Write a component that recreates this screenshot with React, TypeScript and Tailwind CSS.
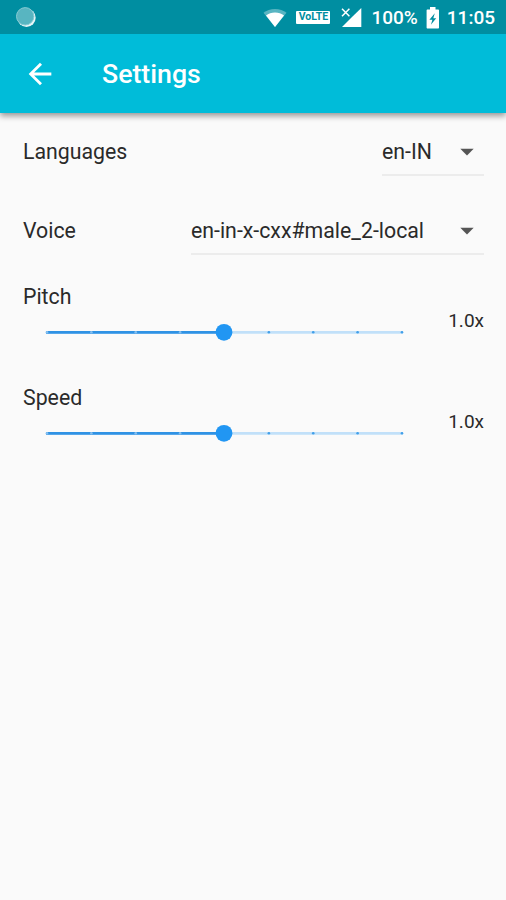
import React from 'react';

interface DropdownRowProps {
    label: string;
    value: string;
    fieldClass: string;
}

interface SliderRowProps {
    label: string;
    value: number;
    min: number;
    max: number;
}

const TRACK_START = 3;
const TRACK_LENGTH = 355;
const DIVISIONS = 8;

function StatusBar() {
    return (
        <div className="flex h-[34px] items-center bg-[#008ea1] pl-4 pr-[11px] text-white">
            <svg width="20" height="20" viewBox="0 0 20 20">
                <circle cx="10.500" cy="10.700" r="9.200" fill="#e6f5f7" />
                <circle cx="9.200" cy="9.300" r="8.700" fill="#58b5c1" stroke="#86cad3" strokeWidth="1" />
            </svg>
            <div className="ml-auto flex items-center">
                <svg width="24" height="20" viewBox="0 0 24 20">
                    <path d="M12 20 0.500 5.700C3.500 3.300 7.500 1.900 12 1.900s8.500 1.400 11.500 3.800z" fill="#fff" fillOpacity="0.35" />
                    <path d="M12 20 3 8.600C5.500 6.600 8.500 5.500 12 5.500s6.500 1.100 9 3.100z" fill="#fff" />
                </svg>
                <span className="ml-[9px] flex h-[13px] w-[34px] items-center justify-center rounded-[1px] bg-white text-[10.5px] leading-none font-bold text-[#008ea1]">
                    VoLTE
                </span>
                <svg className="ml-[11px]" width="21" height="20" viewBox="0 0 21 20">
                    <path d="M20.300 1v19H1L10.500 10.500z" fill="#fff" />
                    <path d="M1 1.800l7.400 7.400M8.400 1.800L1 9.200" stroke="#fff" strokeWidth="1.500" fill="none" />
                </svg>
                <span className="ml-[9px] pt-[2px] text-[19px] leading-8 font-medium">100%</span>
                <svg className="mt-px ml-[8px]" width="14" height="22" viewBox="0 0 14 22">
                    <path d="M4 0h5.500v2.500H12c.6 0 1 .4 1 1v17c0 .6-.4 1-1 1H1.600c-.6 0-1-.4-1-1v-17c0-.6.4-1 1-1H4z" fill="#fff" />
                    <path d="M8.800 6.300 3.400 12.800h3L4.900 17.800l5.300-6.600H7.300z" fill="#008ea1" />
                </svg>
                <span className="ml-[7px] pt-[2px] text-[19px] leading-8 font-medium">11:05</span>
            </div>
        </div>
    );
}

function AppBar() {
    return (
        <div className="flex h-[79px] items-center bg-[#00bcd9] pl-[23px] text-white">
            <button className="flex" title="Back">
                <svg width="34" height="34" viewBox="0 0 24 24" fill="currentColor">
                    <path d="M20 11H7.830l5.590-5.590L12 4l-8 8 8 8 1.410-1.410L7.830 13H20v-2z" />
                </svg>
            </button>
            <h1 className="ml-[45px] pt-px text-[26.7px] leading-8 font-medium">Settings</h1>
        </div>
    );
}

function DropdownRow({ label, value, fieldClass }: DropdownRowProps) {
    return (
        <div className="flex h-[79px] items-center justify-between pb-px">
            <span>{label}</span>
            <button className={`flex h-[48px] items-center justify-between border-b-2 border-[#ececec] pt-0.5 ${fieldClass}`}>
                <span>{value}</span>
                <svg className="mr-[10px]" width="14" height="8" viewBox="0 0 14 8">
                    <path d="M0.300 0.700h13.400L7 7.500z" fill="#555" />
                </svg>
            </button>
        </div>
    );
}

function SliderRow({ label, value, min, max }: SliderRowProps) {
    const thumbX = TRACK_START + ((value - min) / (max - min)) * TRACK_LENGTH;
    const ticks = Array.from({ length: DIVISIONS + 1 }, (_, i) => TRACK_START + (i * TRACK_LENGTH) / DIVISIONS);

    return (
        <div className="flex h-[101px] justify-between">
            <div>
                <div className="h-[34px] leading-[34px]">{label}</div>
                <svg className="ml-[21px]" width="362" height="34" viewBox="0 0 362 34">
                    <path d={`M${TRACK_START - 1} 18.300H${TRACK_START + TRACK_LENGTH + 1}`} stroke="#c1e0f9" strokeWidth="2.800" />
                    <path d={`M${TRACK_START - 1} 18.300H${thumbX}`} stroke="#2f92e4" strokeWidth="2.800" />
                    {ticks.map((x) => (
                        <circle key={x} cx={x} cy="18.300" r="1.300" fill={x < thumbX ? '#84bff0' : '#429fe9'} />
                    ))}
                    <circle cx={thumbX - 0.5} cy="18.300" r="8.400" fill="#2196f3" />
                </svg>
            </div>
            <span className="mt-[24px] h-[34px] text-[19px] leading-[34px]">{value.toFixed(1)}x</span>
        </div>
    );
}

export default function App() {
    return (
        <div className="min-h-screen bg-[#fafafa] font-['Roboto',sans-serif] text-[#2a2a2a]">
            <header className="shadow-[0_3px_6px_rgba(0,0,0,0.4)]">
                <StatusBar />
                <AppBar />
            </header>
            <main className="pr-[22px] pl-[23px] text-[21.3px]">
                <DropdownRow label="Languages" value="en-IN" fieldClass="w-[102px]" />
                <DropdownRow label="Voice" value="en-in-x-cxx#male_2-local" fieldClass="w-[293px]" />
                <div className="pt-[9px]">
                    <SliderRow label="Pitch" value={1} min={0} max={2} />
                    <SliderRow label="Speed" value={1} min={0} max={2} />
                </div>
            </main>
        </div>
    );
}
